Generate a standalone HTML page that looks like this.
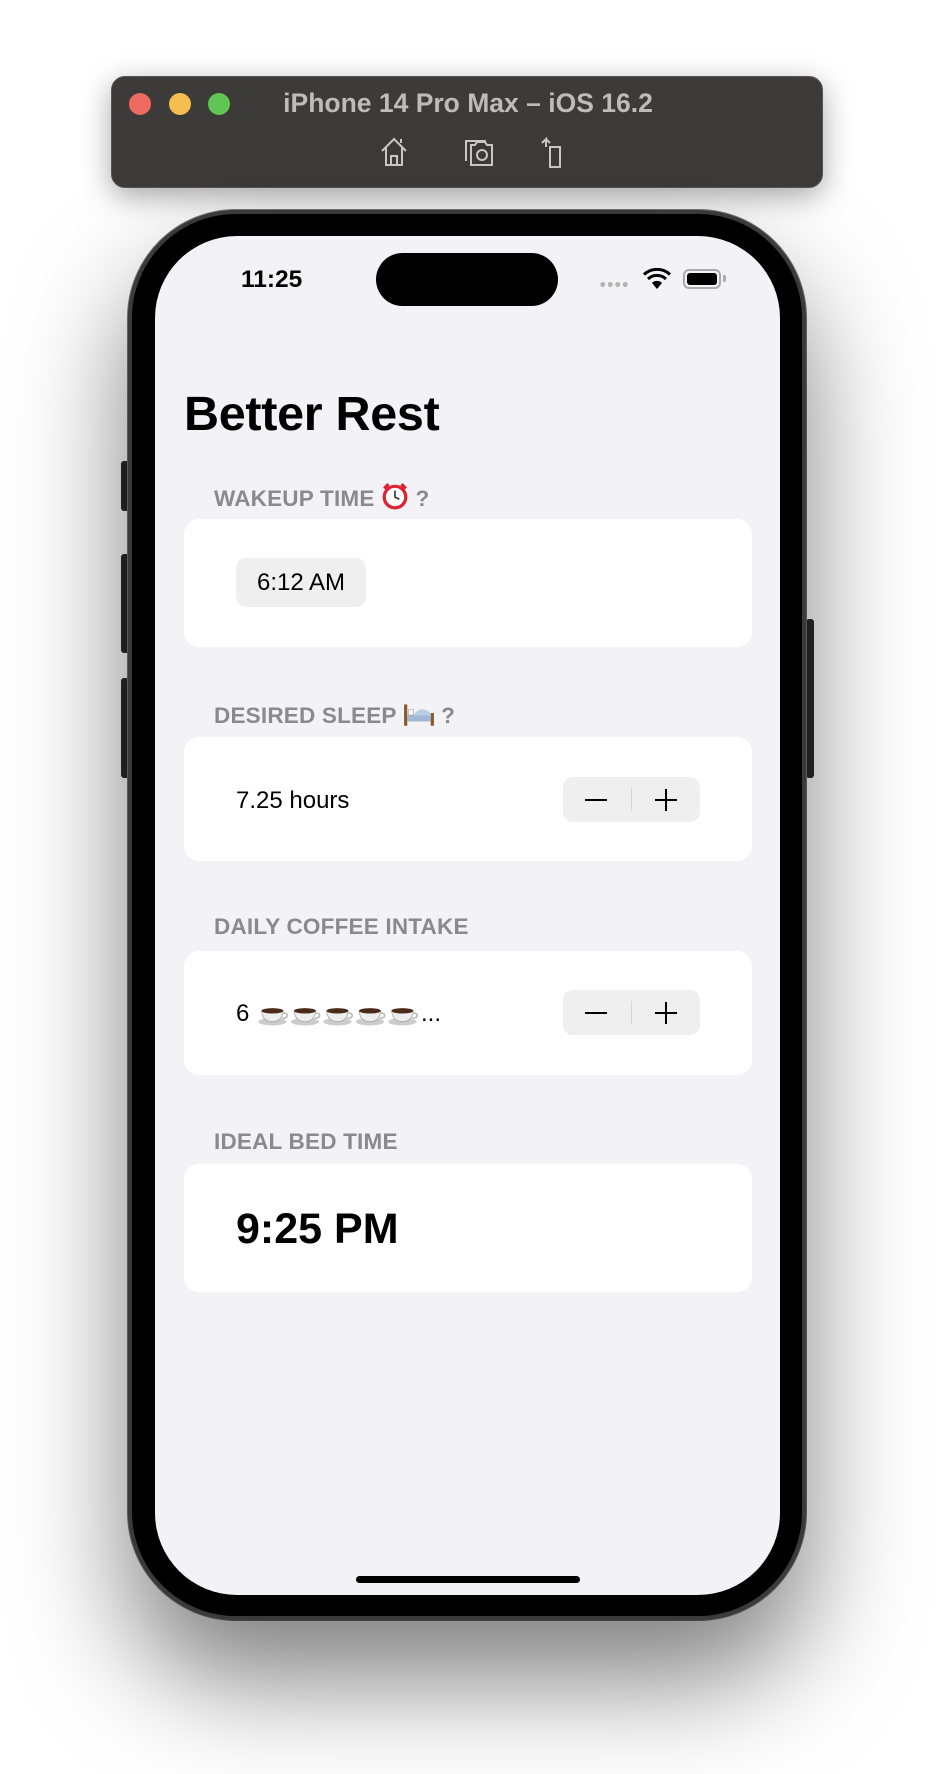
<!DOCTYPE html>
<html><head><meta charset="utf-8"><style>
*{margin:0;padding:0;box-sizing:border-box}
body{width:936px;height:1774px;background:#fff;position:relative;overflow:hidden;font-family:"Liberation Sans",sans-serif}
.abs{position:absolute}
.bar{left:111px;top:76px;width:712px;height:112px;background:#3c3b3a;border-radius:14px;box-shadow:0 8px 30px rgba(0,0,0,.35);border:1px solid #555}
.dot{width:22px;height:22px;border-radius:50%;top:93px}
.phone{left:128px;top:210px;width:678px;height:1410px;border-radius:108px;background:#000;border:4px solid #3a3a3a;box-shadow:0 60px 110px rgba(0,0,0,.5),0 0 0 1px #777}
.screen{left:155px;top:236px;width:625px;height:1359px;border-radius:82px;background:#f2f2f7;overflow:hidden}
.hdr{position:absolute;left:59px;font-size:22.5px;font-weight:bold;color:#8a8a8e;letter-spacing:.2px}
.card{position:absolute;left:29px;width:568px;background:#fff;border-radius:15px}
.step{position:absolute;left:379px;width:137px;height:45px;background:#efeff0;border-radius:10px}
.step .m{position:absolute;left:22px;top:21.5px;width:22px;height:2px;background:#000}
.step .p1{position:absolute;left:92px;top:21.5px;width:22px;height:2px;background:#000}
.step .p2{position:absolute;left:102px;top:11.5px;width:2px;height:22px;background:#000}
.step .d{position:absolute;left:68px;top:11px;width:1px;height:23px;background:#d5d5d8}
.btn{background:#2a2a2a;width:8px;border-radius:3px}
</style></head><body>
<div class="abs bar"></div>
<div class="abs dot" style="left:129px;background:#ec6a5e"></div>
<div class="abs dot" style="left:169px;background:#f4bf4f"></div>
<div class="abs dot" style="left:208px;background:#61c554"></div>
<div class="abs" style="left:111px;width:712px;top:88px;text-align:center;color:#bdbcbb;font-size:26.5px;font-weight:bold;padding-left:2px">iPhone 14 Pro Max – iOS 16.2</div>
<svg class="abs" style="left:378px;top:135px" width="200" height="34" viewBox="0 0 200 34" fill="none" stroke="#c8c8c8" stroke-width="2">
<path d="M4 16 L16 4 L28 16 M8 13 V30 H24 V13 M13 30 V21 H19 V30 M23 8 V4"/>
<path d="M93 10 H97 L99 7 H107 L109 10 H114 V30 H93 Z M88 26 V6 H108"/>
<circle cx="104" cy="20" r="5"/>
<path d="M172 12 H182 V32 H172 Z M168 12 V4 L164 8 M168 4 L172 8"/>
</svg>
<div class="abs btn" style="left:121px;top:461px;height:50px"></div>
<div class="abs btn" style="left:121px;top:554px;height:99px"></div>
<div class="abs btn" style="left:121px;top:678px;height:100px"></div>
<div class="abs btn" style="left:806px;top:619px;height:159px"></div>
<div class="abs phone"></div>
<div class="abs screen">
<div class="abs" style="left:221px;top:17px;width:182px;height:53px;background:#000;border-radius:27px"></div>
<div class="abs" style="left:86px;top:30px;font-size:24.5px;font-weight:bold;color:#000">11:25</div>
<div class="abs" style="left:444px;top:46px;width:30px;height:5px;background-image:radial-gradient(circle,#b5b5b5 2.4px,transparent 2.6px);background-size:7.5px 5px"></div>
<svg class="abs" style="left:488px;top:32px" width="28" height="22" viewBox="0 0 28 22"><path d="M14 21 L9 15 A7 7 0 0 1 19 15 Z" fill="#000"/><path d="M5 11 A13 13 0 0 1 23 11" stroke="#000" stroke-width="3" fill="none"/><path d="M1 6.5 A19 19 0 0 1 27 6.5" stroke="#000" stroke-width="3" fill="none"/></svg>
<div class="abs" style="left:528px;top:33px;width:38px;height:20px;border:2px solid #aaa;border-radius:6px;padding:2px"><div style="width:100%;height:100%;background:#000;border-radius:3px"></div></div>
<div class="abs" style="left:568px;top:39px;width:3px;height:7px;background:#aaa;border-radius:0 2px 2px 0"></div>
<div class="abs" style="left:29px;top:150px;font-size:48.5px;font-weight:bold;color:#000;letter-spacing:-.3px">Better Rest</div>
<div class="hdr" style="top:246px">WAKEUP TIME <svg width="28" height="28" viewBox="0 0 26 26" style="vertical-align:-4px"><circle cx="13" cy="14" r="10" fill="#fff" stroke="#d23" stroke-width="3"/><path d="M3 6 L7 2 M23 6 L19 2" stroke="#d23" stroke-width="3"/><path d="M13 8 V14 L17 16" stroke="#333" stroke-width="1.5" fill="none"/></svg> ?</div>
<div class="card" style="top:283px;height:128px">
<div class="abs" style="left:52px;top:39px;width:130px;height:49px;background:#efeff0;border-radius:10px;font-size:24px;line-height:49px;text-align:center;color:#000">6:12 AM</div>
</div>
<div class="hdr" style="top:464px">DESIRED SLEEP <svg width="32" height="26" viewBox="0 0 30 24" style="vertical-align:-3px"><rect x="1" y="4" width="3" height="20" fill="#8b5a2b"/><rect x="26" y="12" width="3" height="12" fill="#8b5a2b"/><rect x="4" y="14" width="22" height="6" fill="#9fb9d6"/><path d="M10 14 Q16 4 26 12 V14 Z" fill="#b9cde4"/><rect x="5" y="9" width="5" height="5" fill="#fff" stroke="#999" stroke-width=".6"/></svg> ?</div>
<div class="card" style="top:501px;height:124px">
<div class="abs" style="left:52px;top:50px;font-size:24px;color:#000">7.25 hours</div>
<div class="step" style="top:40px"><div class="m"></div><div class="d"></div><div class="p1"></div><div class="p2"></div></div>
</div>
<div class="hdr" style="top:678px">DAILY COFFEE INTAKE</div>
<div class="card" style="top:715px;height:124px">
<div class="abs" style="left:52px;top:49px;font-size:24px;color:#000;white-space:nowrap">6 <svg width="165" height="26" viewBox="0 0 150 24" style="vertical-align:-5px"><g id="c"><ellipse cx="14" cy="20" rx="13" ry="3.5" fill="#ccc"/><path d="M4 10 H24 Q23 20 14 20 Q5 20 4 10Z" fill="#eee" stroke="#aaa" stroke-width=".8"/><ellipse cx="14" cy="10" rx="10" ry="2.5" fill="#4a2a18"/><path d="M24 12 Q29 12 27 16 L23 17" stroke="#bbb" fill="none" stroke-width="1.5"/></g><use href="#c" x="30"/><use href="#c" x="60"/><use href="#c" x="90"/><use href="#c" x="120"/></svg>...</div>
<div class="step" style="top:39px"><div class="m"></div><div class="d"></div><div class="p1"></div><div class="p2"></div></div>
</div>
<div class="hdr" style="top:893px">IDEAL BED TIME</div>
<div class="card" style="top:928px;height:128px">
<div class="abs" style="left:52px;top:41px;font-size:43px;font-weight:bold;color:#000">9:25 PM</div>
</div>
<div class="abs" style="left:201px;top:1340px;width:224px;height:7px;background:#000;border-radius:4px"></div>
</div>
</body></html>
